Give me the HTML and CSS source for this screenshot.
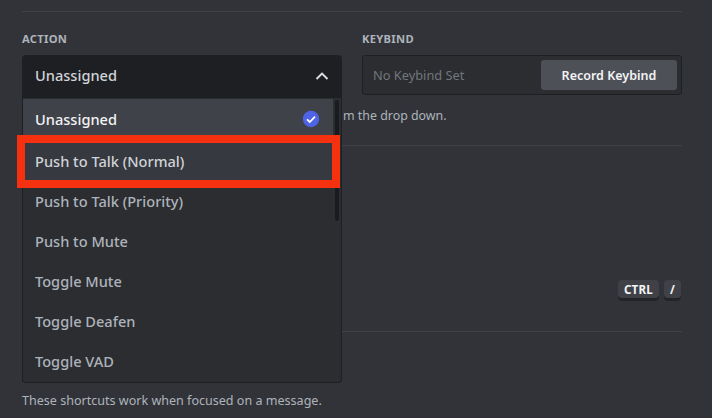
FILE: index.html
```html
<!DOCTYPE html>
<html lang="en">
<head>
<meta charset="utf-8">
<title>Keybinds</title>
<link rel="stylesheet" href="styles.css">
</head>
<body>
<main class="page">
  <hr class="divider">
  <section class="form-row">
    <div class="field">
      <h5 class="label">ACTION</h5>
      <div class="select-wrap">
        <div class="select">
          <span>Unassigned</span>
          <svg class="chevron" width="16" height="16" viewBox="0 0 16 16"><path d="M2.5 11 8 5.6 13.5 11" fill="none" stroke="#dbdee1" stroke-width="2"/></svg>
        </div>
        <div class="menu">
          <div class="scroll-thumb"></div>
          <div class="option selected">
            <span>Unassigned</span>
            <svg class="check" width="18" height="18" viewBox="0 0 18 18"><circle cx="9" cy="9" r="8.2" fill="#4e63e6"/><path d="M5 9.3 7.8 12 13 6.6" fill="none" stroke="#fff" stroke-width="1.8"/></svg>
          </div>
          <div class="option hovered">Push to Talk (Normal)</div>
          <div class="option">Push to Talk (Priority)</div>
          <div class="option">Push to Mute</div>
          <div class="option">Toggle Mute</div>
          <div class="option">Toggle Deafen</div>
          <div class="option">Toggle VAD</div>
          <div class="highlight"></div>
        </div>
      </div>
    </div>
    <div class="field">
      <h5 class="label">KEYBIND</h5>
      <div class="keybind">
        <span class="placeholder">No Keybind Set</span>
        <button class="record">Record Keybind</button>
      </div>
    </div>
  </section>
  <p class="help">m the drop down.</p>
  <hr class="divider after-help">
  <div class="keys"><kbd class="key">CTRL</kbd><kbd class="key">/</kbd></div>
  <hr class="divider after-keys">
  <p class="footer-note">These shortcuts work when focused on a message.</p>
</main>
</body>
</html>
```
FILE: styles.css
```css
* { box-sizing: border-box; }
html, body { margin: 0; height: 100%; }
body {
  background: #313338;
  color: #aeb3bb;
  font-family: "Noto Sans", sans-serif;
  overflow: hidden;
}
.page { width: 712px; height: 418px; padding: 11px 30px 0 22px; }
.divider { margin: 0; border: 0; height: 1px; background: #3f4147; }
.form-row { display: grid; grid-template-columns: 320px 320px; column-gap: 20px; margin-top: 20px; }
.label { margin: 0 0 8px; height: 15px; font-size: 11.2px; line-height: 13px; font-weight: 700; letter-spacing: .3px; color: #aeb3bb; }
.select-wrap { position: relative; }
.select {
  height: 43px; padding: 0 12px 3px 13px;
  display: flex; align-items: center; justify-content: space-between;
  background: #1e1f22; border-radius: 4px 4px 0 0;
  color: #d0d3d8; font-size: 14.6px; font-weight: 500;
}
.chevron { position: relative; top: 1px; }
.menu {
  position: absolute; left: 0; top: 43px; width: 320px; height: 285px;
  background: #2b2d31; border: 1px solid #1e1f22; border-top: 0; border-radius: 0 0 4px 4px;
  padding-top: 1px; padding-right: 8px;
}
.option {
  height: 40px; padding: 0 13px 0 12px;
  display: flex; align-items: center; justify-content: space-between;
  font-size: 14.6px; font-weight: 500; color: #aeb3bb;
}
.selected { height: 42px; padding-bottom: 2px; background: #404249; color: #f2f3f5; }
.hovered { background: #36393f; color: #d0d3d8; }
.scroll-thumb { position: absolute; right: 2px; top: 2px; width: 4px; height: 121px; background: #1a1b1e; border-radius: 2px; }
.highlight { position: absolute; left: -6px; top: 37px; width: 323px; height: 53px; border: 8px solid #f5310f; }
.keybind {
  height: 40px; padding: 4px 4px 4px 10px;
  display: flex; align-items: center; justify-content: space-between;
  background: #2b2d31; border: 1px solid #1e1f22; border-radius: 3px;
}
.placeholder { font-size: 12.8px; color: #72767d; }
.record {
  width: 136px; height: 30px; border: 0; border-radius: 3px; padding: 0;
  background: #4e5058; color: #f2f3f5;
  font: 600 12.5px "Noto Sans", sans-serif;
}
.help { margin: 8px 0 0; padding-left: 321px; height: 20px; font-size: 12.4px; line-height: 20px; white-space: nowrap; }
.after-help { margin-top: 19px; }
.keys { display: flex; justify-content: flex-end; gap: 5px; margin-top: 134px; margin-right: 1px; height: 21px; }
.key {
  height: 21px; min-width: 17px; padding: 0 6px 3px;
  display: flex; align-items: center; justify-content: center;
  background: #3f4147; border-radius: 4px; box-shadow: inset 0 -3px 0 #232428;
  color: #f2f3f5; font: 700 11.6px "Noto Sans", sans-serif;
  letter-spacing: .2px;
}
.after-keys { margin-top: 30px; }
.footer-note { margin: 59px 0 0; font-size: 12.55px; line-height: 20px; white-space: nowrap; }
```
